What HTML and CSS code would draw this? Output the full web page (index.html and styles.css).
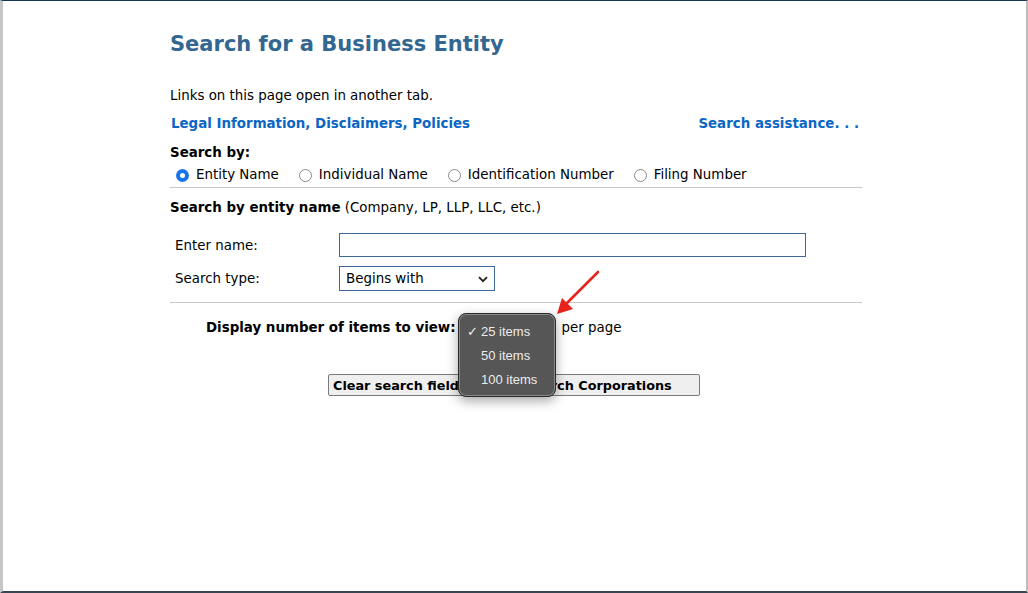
FILE: index.html
```html
<!DOCTYPE html>
<html lang="en">
<head>
<meta charset="utf-8">
<title>Search for a Business Entity</title>
<link rel="stylesheet" href="styles.css">
</head>
<body>
<div class="frame">
  <div class="content">
    <h1 class="title">Search for a Business Entity</h1>
    <p class="note">Links on this page open in another tab.</p>
    <div class="links">
      <a class="link" href="#">Legal Information, Disclaimers, Policies</a>
      <a class="link" href="#">Search assistance. . .</a>
    </div>
    <div class="searchby">Search by:</div>
    <div class="radios">
      <label class="radio"><span class="dot checked"></span>Entity Name</label>
      <label class="radio"><span class="dot"></span>Individual Name</label>
      <label class="radio"><span class="dot"></span>Identification Number</label>
      <label class="radio"><span class="dot"></span>Filing Number</label>
    </div>
    <div class="section">
      <div class="subhead"><b>Search by entity name</b> (Company, LP, LLP, LLC, etc.)</div>
      <div class="form">
        <div class="label">Enter name:</div>
        <div class="textbox"></div>
        <div class="label">Search type:</div>
        <div class="select">Begins with
          <svg class="chev" width="10" height="7" viewBox="0 0 10 7"><path d="M1 1.2 L5 5.2 L9 1.2" fill="none" stroke="#222" stroke-width="1.8"/></svg>
        </div>
      </div>
    </div>
    <div class="display">
      <b>Display number of items to view:</b>
      <div class="mini-select"></div>
      <span>per page</span>
    </div>
    <div class="buttons">
      <button class="btn btn-clear">Clear search fields</button>
      <button class="btn btn-search">Search Corporations</button>
    </div>
  </div>

  <div class="menu">
    <div class="item"><span class="check">✓</span>25 items</div>
    <div class="item">50 items</div>
    <div class="item">100 items</div>
  </div>

  <svg class="arrow" width="50" height="50" viewBox="0 0 50 50">
    <line x1="45" y1="3" x2="12" y2="36" stroke="#e8231b" stroke-width="2.6" stroke-linecap="round"/>
    <polygon points="4,45 9,29 20,40" fill="#e8231b"/>
  </svg>
</div>
</body>
</html>
```

FILE: styles.css
```css
html, body {
  margin: 0;
  padding: 0;
  background: #ffffff;
}

.frame {
  position: relative;
  box-sizing: border-box;
  width: 1028px;
  height: 593px;
  border-left: 3px solid #c6c6c6;
  border-top: 1px solid #17355a;
  border-right: 2px solid #bdbdbd;
  border-bottom: 2px solid #3a4552;
  font-family: Verdana, "DejaVu Sans", sans-serif;
  font-size: 13.4px;
  color: #000;
}

.content {
  margin-left: 167px;
  width: 692px;
  padding-top: 30px;
}

.title {
  margin: 0;
  font-size: 21px;
  line-height: 26px;
  font-weight: bold;
  color: #336791;
}

.note {
  margin: 30px 0 0 0;
  line-height: 18px;
}

.links {
  display: flex;
  justify-content: space-between;
  margin-top: 10px;
  padding: 0 3px 0 1px;
  line-height: 18px;
}

.link {
  color: #0b66c4;
  font-weight: bold;
  text-decoration: none;
}

.searchby {
  margin: 11px 0 0 0;
  font-weight: bold;
  line-height: 18px;
}

.radios {
  display: flex;
  gap: 20px;
  padding: 4px 0 3px 6px;
  line-height: 18px;
  border-bottom: 1px solid #c8c8c8;
}

.radio {
  display: flex;
  align-items: center;
  gap: 7px;
}

.dot {
  box-sizing: border-box;
  width: 13px;
  height: 13px;
  border-radius: 50%;
  border: 1px solid #8a8a8a;
  background: #fff;
}

.dot.checked {
  border: 4px solid #1a73e8;
  background: #fff;
}

.section {
  border-bottom: 1px solid #c8c8c8;
  padding: 11px 0 11px 0;
}

.subhead {
  line-height: 18px;
}

.form {
  display: grid;
  grid-template-columns: 164px 467px;
  row-gap: 9px;
  align-items: center;
  margin-top: 16px;
  padding-left: 5px;
}

.label {
  line-height: 18px;
  padding-top: 1px;
}

.textbox {
  box-sizing: border-box;
  height: 24px;
  border: 1px solid #3d6a99;
  background: #fff;
}

.select {
  position: relative;
  box-sizing: border-box;
  width: 156px;
  height: 25px;
  border: 1px solid #3d6a99;
  padding: 3px 0 0 6px;
  line-height: 18px;
}

.chev {
  position: absolute;
  right: 6px;
  top: 9px;
}

.display {
  display: flex;
  align-items: center;
  gap: 7px;
  margin-top: 15px;
  padding-left: 36px;
  line-height: 18px;
}

.mini-select {
  width: 92px;
  height: 20px;
}

.buttons {
  display: flex;
  gap: 26px;
  margin-top: 36px;
  padding-left: 158px;
}

.btn {
  box-sizing: border-box;
  height: 22px;
  font-family: Verdana, "DejaVu Sans", sans-serif;
  font-size: 12.8px;
  font-weight: bold;
  color: #000;
  background: #efefef;
  border: 1px solid #7a7a7a;
  border-radius: 2px;
  padding: 0 4px;
  white-space: nowrap;
}

.btn-clear {
  width: 142px;
  text-align: left;
  overflow: hidden;
}

.btn-search {
  width: 204px;
}

.menu {
  position: absolute;
  left: 455px;
  top: 312px;
  box-sizing: border-box;
  width: 98px;
  height: 84px;
  padding-top: 6px;
  background: #565656;
  border: 1px solid #2a2a2a;
  box-shadow: inset 0 0 0 1px #8a8a8a, 0 4px 12px rgba(0, 0, 0, 0.35);
  border-radius: 8px;
  font-family: "Liberation Sans", Arial, sans-serif;
  font-size: 13px;
  color: #ececec;
}

.item {
  height: 24px;
  line-height: 24px;
  padding-left: 22px;
  position: relative;
}

.check {
  position: absolute;
  left: 8px;
  top: 0;
  font-size: 13px;
}

.arrow {
  position: absolute;
  left: 550px;
  top: 268px;
}
```
